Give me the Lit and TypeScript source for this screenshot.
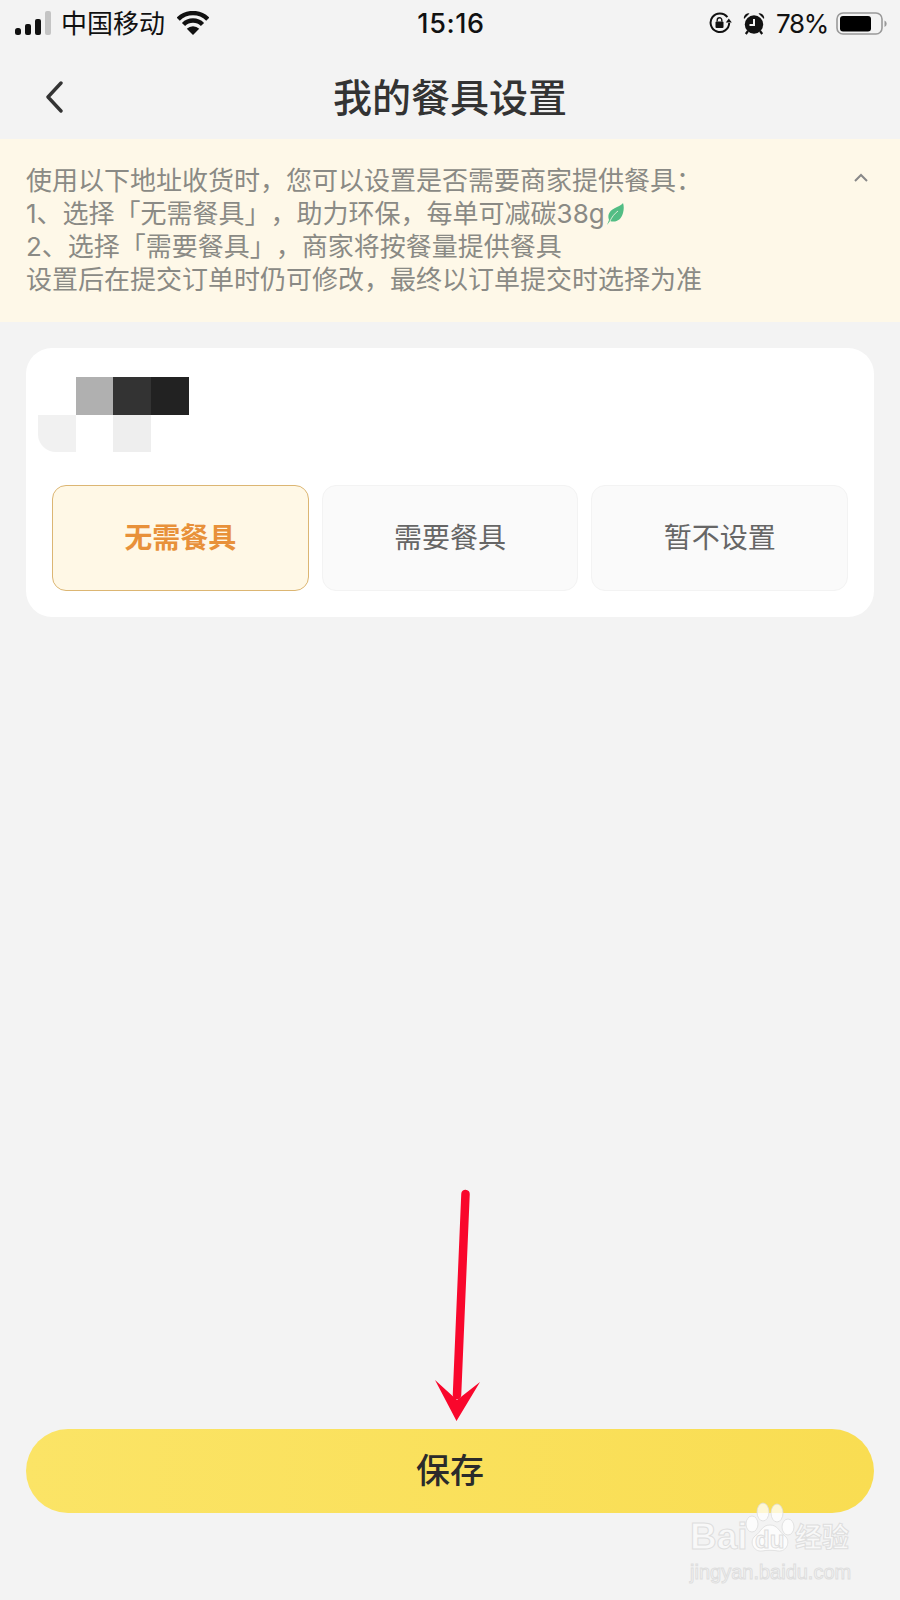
import { LitElement, html, css } from 'lit';
import { customElement, state } from 'lit/decorators.js';

@customElement('app-root')
export class AppRoot extends LitElement {
  @state()
  selected = 0;

  private options = ['无需餐具', '需要餐具', '暂不设置'];

  static styles = css`
    :host {
      display: block;
      position: relative;
      width: 900px;
      height: 1600px;
      overflow: hidden;
      background: #f3f3f3;
      font-family: 'Noto Sans CJK SC', sans-serif;
      text-spacing-trim: space-all;
    }
    * {
      box-sizing: border-box;
    }
    svg {
      display: block;
    }
    .page {
      display: flex;
      flex-direction: column;
      height: 100%;
    }
    .status {
      display: flex;
      align-items: center;
      height: 48px;
      padding: 0 13px 2px 15px;
      color: #111;
    }
    .status-left,
    .status-right {
      flex: 1;
      display: flex;
      align-items: center;
    }
    .status-right {
      justify-content: flex-end;
    }
    .carrier {
      font-size: 26px;
      margin: 0 12px 3px 10px;
      line-height: 30px;
    }
    .time {
      font-family: Inter, sans-serif;
      font-size: 27px;
      font-weight: 500;
      letter-spacing: 0.6px;
    }
    .battery-text {
      font-family: Inter, sans-serif;
      font-size: 26px;
      letter-spacing: -1.3px;
      margin: 0 8px 0 11px;
    }
    .lock {
      margin-right: 11px;
    }
    .nav {
      display: grid;
      grid-template-columns: 1fr auto 1fr;
      align-items: center;
      height: 91px;
      padding-top: 6px;
    }
    .back {
      margin-left: 45px;
    }
    .nav h1 {
      margin: 0 0 4px;
      font-size: 39px;
      font-weight: 500;
      line-height: 50px;
      color: #333;
    }
    .banner {
      display: flex;
      justify-content: space-between;
      height: 183px;
      padding: 25px 32px 0 26px;
      background: #fef8e8;
      color: #8a8a85;
      font-family: Inter, 'Noto Sans CJK SC', sans-serif;
      font-size: 26px;
      line-height: 33px;
    }
    .banner p {
      margin: 0;
      white-space: nowrap;
    }
    .leaf {
      display: inline-block;
      vertical-align: -3px;
      margin-left: 1px;
    }
    .fold {
      margin-top: 9px;
    }
    .card {
      margin: 26px 26px 0;
      padding: 29px 26px 26px;
      background: #fff;
      border-radius: 26px;
    }
    .mosaic {
      display: grid;
      grid-template-columns: repeat(4, 37.7px);
      grid-auto-rows: 37.7px;
      margin: 0 0 33px -14px;
    }
    .m1 { background: #b0b0b0; }
    .m2 { background: #333; }
    .m3 { background: #222; }
    .m4 { background: #f1f1f1; border-radius: 0 0 0 18px; }
    .m5 { background: #eeeeee; }
    .options {
      display: grid;
      grid-template-columns: repeat(3, 1fr);
      gap: 13px;
    }
    .option {
      display: flex;
      align-items: center;
      justify-content: center;
      height: 106px;
      padding-bottom: 5px;
      border: 1px solid #f3f3f3;
      border-radius: 14px;
      background: #fafafa;
      color: #666;
      font-size: 28px;
    }
    .option.on {
      border-color: #dcb673;
      background: #fff8e6;
      color: #e8913a;
      font-weight: 700;
    }
    .save {
      display: flex;
      align-items: center;
      justify-content: center;
      height: 84px;
      margin: auto 26px 87px;
      padding-bottom: 6px;
      border-radius: 42px;
      background: linear-gradient(90deg, #fbe466, #f9dd52);
      color: #2b2b2b;
      font-size: 34px;
      font-weight: 500;
    }
    .arrow {
      position: absolute;
      left: 420px;
      top: 1180px;
    }
    .mark {
      position: absolute;
      left: 690px;
      top: 1500px;
      width: 180px;
      height: 84px;
      color: #f8f8f8;
      -webkit-text-stroke: 1px #dedede;
    }
    .mark-top {
      display: flex;
      align-items: flex-end;
      height: 56px;
    }
    .bai {
      font-family: 'Liberation Sans', sans-serif;
      font-size: 37px;
      font-weight: 700;
      line-height: 38px;
      width: 55px;
    }
    .paw {
      position: relative;
      width: 50px;
      height: 56px;
    }
    .du {
      position: absolute;
      left: 10px;
      top: 28px;
      font-family: 'Liberation Sans', sans-serif;
      font-size: 24px;
      font-weight: 700;
      line-height: 24px;
    }
    .jy {
      font-size: 27px;
      font-weight: 700;
      line-height: 40px;
    }
    .url {
      font-family: 'Liberation Sans', sans-serif;
      font-size: 20px;
      line-height: 26px;
      margin-top: 3px;
    }
  `;

  render() {
    return html`
      <div class="page">
        <div class="status">
          <div class="status-left">
            <svg width="36" height="24" viewBox="0 0 36 24">
              <rect x="0" y="17" width="6" height="7" rx="2.5" fill="#111" />
              <rect x="10" y="13" width="6" height="11" rx="2" fill="#111" />
              <rect x="20" y="8" width="6" height="16" rx="2" fill="#111" />
              <rect x="30" y="0" width="6" height="24" rx="2" fill="#c4c4c4" />
            </svg>
            <span class="carrier">中国移动</span>
            <svg width="32" height="24" viewBox="0 0 32 24">
              <path d="M1.2 8.2a21 21 0 0 1 29.6 0" fill="none" stroke="#111" stroke-width="4.5" />
              <path d="M6.5 13.5a13.5 13.5 0 0 1 19 0" fill="none" stroke="#111" stroke-width="4.5" />
              <path d="M16 24l-6.2-6.2a8.8 8.8 0 0 1 12.4 0z" fill="#111" />
            </svg>
          </div>
          <span class="time">15:16</span>
          <div class="status-right">
            <svg class="lock" width="23" height="22" viewBox="0 0 23 22">
              <path d="M18.4 5.2A9.3 9.3 0 1 0 20.2 11" fill="none" stroke="#111" stroke-width="2" />
              <path d="M16.8 10.5h6l-3-4z" fill="#111" />
              <rect x="6.5" y="9.5" width="8" height="6.5" rx="1" fill="#111" />
              <path d="M8.2 9.5V8a2.3 2.3 0 0 1 4.6 0v1.5" fill="none" stroke="#111" stroke-width="1.4" />
            </svg>
            <svg width="22" height="23" viewBox="0 0 22 23">
              <path d="M1 7a4.5 4.5 0 0 1 5.5-5.5zM21 7a4.5 4.5 0 0 0-5.5-5.5z" fill="#111" />
              <path d="M5 19l-2.2 3M17 19l2.2 3" stroke="#111" stroke-width="2.2" />
              <circle cx="11" cy="12.5" r="9.2" fill="#111" />
              <path d="M11 7v6H6.5" fill="none" stroke="#f3f3f3" stroke-width="2" />
            </svg>
            <span class="battery-text">78%</span>
            <svg width="51" height="23" viewBox="0 0 51 23">
              <rect x="1" y="1" width="45" height="21" rx="6" fill="none" stroke="#999" stroke-width="1.6" />
              <rect x="4" y="4" width="31" height="15.5" rx="3" fill="#000" />
              <path d="M48.5 8.5a3.5 3.5 0 0 1 0 6.5z" fill="#999" />
            </svg>
          </div>
        </div>

        <div class="nav">
          <svg class="back" width="18" height="32" viewBox="0 0 18 32">
            <path d="M16 2L3 16l13 14" fill="none" stroke="#333" stroke-width="3.4" stroke-linecap="round" stroke-linejoin="round" />
          </svg>
          <h1>我的餐具设置</h1>
        </div>

        <div class="banner">
          <p>
            使用以下地址收货时，您可以设置是否需要商家提供餐具：<br />
            1、选择「无需餐具」，助力环保，每单可减碳38g<svg class="leaf" width="18" height="24" viewBox="0 0 18 24">
              <path d="M17 1C17 1 16 3 11 5C4 8 1 12 3 18L1 23L4 19C10 21 15 18 17 11C18 7 18 4 17 1Z" fill="#52bd84" />
              <path d="M4 19C6 15 8 12 12 9" fill="none" stroke="#fef8e8" stroke-width="0.8" />
            </svg><br />
            2、选择「需要餐具」，商家将按餐量提供餐具<br />
            设置后在提交订单时仍可修改，最终以订单提交时选择为准
          </p>
          <svg class="fold" width="14" height="9" viewBox="0 0 14 9">
            <path d="M1 8l6-6 6 6" fill="none" stroke="#888" stroke-width="2" />
          </svg>
        </div>

        <div class="card">
          <div class="mosaic">
            <i></i><i class="m1"></i><i class="m2"></i><i class="m3"></i>
            <i class="m4"></i><i></i><i class="m5"></i><i></i>
          </div>
          <div class="options">
            ${this.options.map(
              (label, i) => html`
                <div class="option ${i === this.selected ? 'on' : ''}" @click=${() => (this.selected = i)}>
                  ${label}
                </div>
              `
            )}
          </div>
        </div>

        <div class="save">保存</div>
      </div>

      <svg class="arrow" width="70" height="245" viewBox="0 0 70 245">
        <path d="M45.5 14L37 215" stroke="#f9072c" stroke-width="8.5" stroke-linecap="round" fill="none" />
        <path d="M15 200L37 220L60 202L36.5 241Z" fill="#f9072c" />
      </svg>

      <div class="mark">
        <div class="mark-top">
          <span class="bai">Bai</span>
          <div class="paw">
            <svg width="50" height="56" viewBox="0 0 50 56">
              <g fill="#fff" fill-opacity="0.75" stroke="#dcdcdc" stroke-opacity="0.8">
                <ellipse cx="18" cy="12" rx="6" ry="9" />
                <ellipse cx="32" cy="13" rx="6" ry="9" />
                <ellipse cx="7" cy="24" rx="6" ry="8" />
                <ellipse cx="43" cy="27" rx="6" ry="8" />
                <path d="M25 25C33 25 34 32 40 36C46 41 42 52 33 51C28 50 22 50 17 51C8 52 4 41 10 36C16 32 17 25 25 25Z" />
              </g>
            </svg>
            <span class="du">du</span>
          </div>
          <span class="jy">经验</span>
        </div>
        <div class="url">jingyan.baidu.com</div>
      </div>
    `;
  }
}
